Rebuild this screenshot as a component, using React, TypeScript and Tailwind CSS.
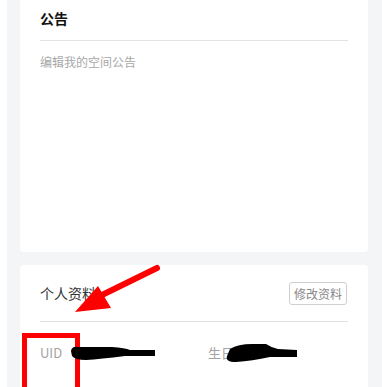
import React from 'react';

const font = { fontFamily: '"Noto Sans CJK SC", "Noto Sans", sans-serif' };

export default function App() {
  return (
    <div className="relative w-[382px] h-[387px] overflow-hidden bg-white" style={font}>
      <div className="ml-[7px] h-full bg-[#f4f5f7] pl-[13px] pr-[14px]">
        {/* 公告 */}
        <div className="w-[348px] h-[252px] bg-white rounded-b-[4px] px-5 pt-[7px]">
          <div className="h-[22px] leading-[22px] text-[14px] font-bold text-[#111]">公告</div>
          <div className="mt-[11px] border-b border-[#e3e3e3]" />
          <div className="mt-[11px] leading-[20px] text-[12px] text-[#a8a8a8]">编辑我的空间公告</div>
        </div>

        {/* 个人资料 */}
        <div className="mt-[13px] w-[348px] h-[200px] bg-white rounded-[4px] px-5">
          <div className="h-[57px] flex items-center justify-between border-b border-[#e3e3e3]">
            <span className="text-[14px] text-[#333]">个人资料</span>
            <button className="mr-[1px] h-[23px] px-[4px] border border-[#cfcfcf] rounded-[3px] text-[12px] leading-[21px] text-[#888] bg-white">
              修改资料
            </button>
          </div>
          <div className="pt-[21px] flex text-[13px] leading-[20px] text-[#a3a3a3]">
            <span className="w-[168px]">UID</span>
            <span>生日</span>
          </div>
        </div>
      </div>

      {/* annotations */}
      <svg className="absolute left-0 top-0" width="382" height="387" viewBox="0 0 382 387">
        <line x1="157" y1="268" x2="102" y2="295" stroke="#ff0000" strokeWidth="6" strokeLinecap="round" />
        <polygon points="75,312 98,286 111,308" fill="#ff0000" />
        <rect x="24.5" y="335.5" width="53" height="60" fill="none" stroke="#ff0000" strokeWidth="5" />
        <path d="M71 351 Q72 346 78 347 L112 347 Q125 348 130 350 L155 350 L155 356 L125 356 Q100 359 86 360 Q75 360 72 356 Z" fill="#000" />
        <path d="M230 349 Q238 344 252 344 L266 344 Q272 348 278 349 L297 350 L297 357 L270 357 Q252 361 236 362 Q225 362 227 356 Z" fill="#000" />
      </svg>
    </div>
  );
}
